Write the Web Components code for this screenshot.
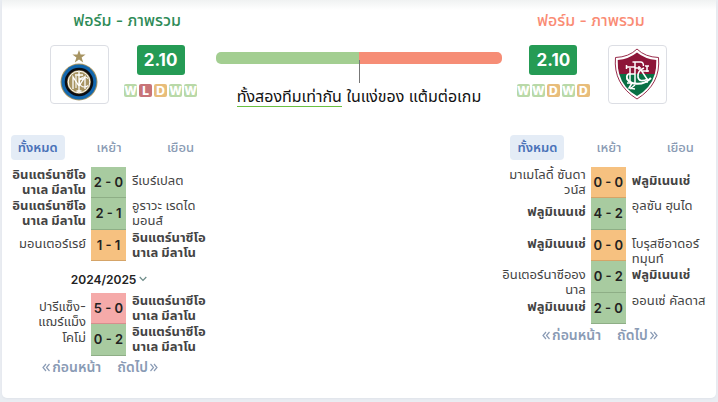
<!DOCTYPE html>
<html lang="th">
<head>
<meta charset="utf-8">
<meta name="viewport" content="width=device-width, initial-scale=1">
<title>ฟอร์ม - ภาพรวม</title>
<style>
  html, body { margin: 0; }
  body { background: #e9edf2; color: #212529; font: 13px/15px "Inter", "Noto Sans Thai", "Noto Sans", sans-serif; }
</style>
</head>
<body>
<form-comparison></form-comparison>

<template id="tpl-comparison">
  <style>
    :host { display: block; box-sizing: border-box; min-height: 100vh; padding: 0 2px 4px; }
    main { box-sizing: border-box; min-height: calc(100vh - 4px); background: linear-gradient(#f0f2f2, #fff 10px); border-radius: 0 0 5px 5px; box-shadow: 0 1px 2px #e0e4ea;
      display: grid; grid-template-columns: 3fr 4fr 3fr; align-items: start; }
  </style>
  <main>
    <team-panel side="home"></team-panel>
    <points-bar><span slot="lead">ทั้งสองทีมเท่ากัน</span> ในแง่ของ แต้มต่อเกม</points-bar>
    <team-panel side="away"></team-panel>
  </main>
</template>

<template id="tpl-bar">
  <style>
    :host { display: block; padding-top: 52px; text-align: center; font-size: 16px; line-height: 19px; }
    .bar { height: 12px; border-radius: 5px; background: linear-gradient(90deg, #a3ce91 50%, #f68d76 50%); position: relative; }
    .bar::after { content: ""; position: absolute; left: 50%; top: 8px; width: 1px; height: 23px; background: #777; }
    p { margin: 23px 0 0; color: #111; white-space: nowrap; }
    ::slotted(span) { display: inline-block; border-bottom: 1px solid #6abf40; }
  </style>
  <div class="bar"></div>
  <p><slot name="lead"></slot><slot></slot></p>
</template>

<template id="tpl-panel">
  <style>
    :host { display: block; }
    h2 { margin: 0; padding: 10px 0 0 36px; font-size: 16px; line-height: 20px; font-weight: 500; text-align: center; color: #2e8b57; }
    .badges { display: flex; justify-content: center; gap: 15px; padding: 15px 0 0 29px; }
    :host([side=away]) h2 { padding: 10px 36px 0 0; color: #fa8b74; }
    :host([side=away]) .badges { flex-direction: row-reverse; gap: 18px; padding: 15px 34px 0 0; }
    .tabs { display: grid; grid-template-columns: repeat(3, 1fr); justify-items: center; padding: 31px 0 7px; }
    .tabs button { width: 54px; height: 25px; border: 0; border-radius: 4px; padding: 0; background: none; font: inherit; font-weight: 500; color: #8a9bb4; }
    .tabs button[aria-selected=true] { background: #e4ecf6; color: #4a72b8; font-weight: 600; }
    .season { display: flex; align-items: center; justify-content: center; gap: 3px; width: 100%; height: 32px; padding: 4px 0 0; border: 0; background: none; font: inherit; font-size: 12px; font-weight: 600; color: #222; }
    nav { display: flex; justify-content: center; gap: 16px; padding: 3px 18px 0 0; font-size: 14px; font-weight: 600; line-height: 16px; }
    nav a { display: flex; align-items: center; gap: 2px; color: #8a9bb5; text-decoration: none; }
  </style>
  <h2>ฟอร์ม - ภาพรวม</h2>
  <div class="badges"><team-crest></team-crest><form-rating></form-rating></div>
  <div class="tabs" role="tablist">
    <button role="tab" aria-selected="true">ทั้งหมด</button><button role="tab" aria-selected="false">เหย้า</button><button role="tab" aria-selected="false">เยือน</button>
  </div>
  <div class="results"></div>
  <nav>
    <a href="#prev"><svg width="8" height="9" fill="none" stroke="currentColor" stroke-width="1.2"><path d="M4 1 1 4.500 4 8M7.500 1l-3 3.500 3 3.500"/></svg>ก่อนหน้า</a>
    <a href="#next">ถัดไป<svg width="8" height="9" fill="none" stroke="currentColor" stroke-width="1.2"><path d="m.5 1 3 3.500-3 3.500M4 1l3 3.500L4 8"/></svg></a>
  </nav>
</template>

<template id="tpl-rating">
  <style>
    :host { display: flex; flex-direction: column; align-items: center; gap: 9px; font-family: Inter, sans-serif; color: #fff; }
    strong { width: 48px; border-radius: 3px; background: #259b55; font-size: 17px; line-height: 30px; font-weight: 700; text-align: center; }
    div { display: flex; gap: 2px; }
    b { width: 13px; height: 13px; border-radius: 2px; font-size: 12px; line-height: 13px; font-weight: 800; text-align: center; display: flex; justify-content: center; }
    .W { background: #b9d9a8; } .L { background: #c87478; } .D { background: #e8bd7b; }
  </style>
  <strong>2.10</strong>
  <div></div>
</template>

<template id="tpl-results">
  <style>
    :host { display: block; }
    table { width: 100%; table-layout: fixed; border-collapse: separate; border-spacing: 0; }
    td { box-sizing: border-box; padding: 0; height: 31px; vertical-align: top; color: #444; }
    tr:nth-child(even) td { height: 32px; }
    td:first-child { width: 89px; text-align: right; }
    td.score { width: 35px; vertical-align: middle; text-align: center; font-family: Inter, sans-serif; font-size: 13px; font-weight: 600; color: #222; border-bottom: 1px solid #8eae86; background: #a8cba0; }
    td.draw { background: #f6c180; border-color: #d5a468; }
    td.loss { background: #f5aaa9; border-color: #d68e8e; }
    .name { height: 31px; padding: 0 0 0 6px; white-space: nowrap; box-sizing: border-box; }
    td:first-child .name { padding: 0 5px 0 0; }
    .name.low, td:first-child .name.low { padding-top: 6px; }
    .own { font-weight: 700; }
  </style>
  <table><tbody></tbody></table>
</template>

<template id="tpl-crest">
  <style>
    :host { display: flex; align-items: center; justify-content: center; box-sizing: border-box; width: 59px; height: 59px; border: 1px solid #dcdee4; border-radius: 4px; background: #fff; }
    svg { display: block; }
  </style>
</template>

<script>
const INTER_CREST = `<svg width="41" height="55" viewBox="0 0 41 55" role="img" aria-label="Inter">
<path d="m20 3 1.600 4.600h5L22.600 10.500l1.600 4.900L20 12.400l-4.200 3 1.600-4.900L13.400 7.600h5z" fill="#a79462"/>
<circle cx="20" cy="35" r="18.500" fill="#a79462"/><circle cx="20" cy="35" r="17.500" fill="#1267ae"/>
<circle cx="20" cy="35" r="14.300" fill="#0c0d12"/><circle cx="20" cy="35" r="11.800" fill="#a79462"/>
<g fill="none" stroke="#fff" stroke-width="1.300"><circle cx="20" cy="35" r="10.800" stroke-width="1"/>
<path d="M14 42V30l6 9 6-9v12M20 25v20M16 28h8M17.500 44h5M20 32h4.500"/>
<path d="M29 31.500a5 5 0 1 0 0 7M17 29v12" stroke-width="1.100"/></g></svg>`;
const FLU_CREST = `<svg width="46" height="53" viewBox="0 0 46 53" role="img" aria-label="Fluminense">
<path d="M23 1Q31 9 44.500 9.500 47 36 23 51-1 36 1.500 9.500 15 9 23 1Z" fill="#fff" stroke="#8d1538" stroke-width=".9"/>
<path d="M23 4.500Q31 11 42.300 12 42.500 20 40.800 26H5.200Q3.500 20 3.700 12 15 11 23 4.500Z" fill="#8d1538"/>
<path d="M5.200 26h35.600Q37 40 23 48 9 40 5.200 26Z" fill="#087044"/>
<g fill="none" stroke="#fff" stroke-width="1.500"><path d="M21 14v22M18.500 14h8q3 0 3 4M21 20h6M25 18v4M16 20v14M13 35h6M12.500 19h8M14 26h7M12.500 17v4"/>
<path d="M31 18h4M33 18v6M28 23h7M21 37l-5 4M18 35l-3 5 6 1M27 22l6 9M31 34h3"/>
<path d="M37 30Q29 38 18 35 10 31 14 26" stroke-width="2"/><path d="M30 20q-7 3-6 9t10 2" stroke-width="1.600"/></g></svg>`;
const INTER = 'อินแตร์นาซีโอ|นาเล มีลาโน', FLU = 'ฟลูมิเนนเช่';
/* Rows: [home, score, away, outcome, home placement, away placement] */
const TEAMS = {
  home: { form: 'WLDWW', crest: INTER_CREST, groups: [
    [[INTER, '2 - 0', 'รีเบร์เปลต', 'win', '', 'low'],
     [INTER, '2 - 1', 'อูราวะ เรดได|มอนส์', 'win', '', ''],
     ['มอนเตอร์เรย์', '1 - 1', INTER, 'draw', 'low', '']],
    [['ปารีแซ็ง-|แฌร์แม็ง', '5 - 0', INTER, 'loss', 'low', ''],
     ['โคโม่', '0 - 2', INTER, 'win', 'low', '']]] },
  away: { form: 'WWDWD', crest: FLU_CREST, groups: [
    [['มาเมโลดี้ ซันดา|วน์ส', '0 - 0', FLU, 'draw', '', 'low'],
     [FLU, '4 - 2', 'อุลซัน ฮุนได', 'win', 'low', ''],
     [FLU, '0 - 0', 'โบรุสซีอาดอร์|ทมุนท์', 'draw', 'low', 'low'],
     ['อินเตอร์นาซีออง|นาล', '0 - 2', FLU, 'win', 'low', 'low'],
     [FLU, '2 - 0', 'ออนเซ่ คัลดาส', 'win', 'low', '']]] }
};
class Base extends HTMLElement {
  mount(id) {
    const root = this.attachShadow({ mode: 'open' });
    root.append(document.getElementById(id).content.cloneNode(true));
    return root;
  }
}
customElements.define('team-crest', class extends Base {
  connectedCallback() { if (!this.shadowRoot) this.mount('tpl-crest').append(document.createRange().createContextualFragment(this.svg || '')); }
});
customElements.define('form-rating', class extends Base {
  connectedCallback() {
    if (this.shadowRoot) return;
    this.mount('tpl-rating').querySelector('div').innerHTML = [...this.form].map(c => `<b class="${c}">${c}</b>`).join('');
  }
});
customElements.define('result-list', class extends Base {
  connectedCallback() {
    if (this.shadowRoot) return;
    const cell = (name, place) => `<td><div class="name ${place} ${name === INTER || name === FLU ? 'own' : ''}">${name.replace('|', '<br>')}</div></td>`;
    this.mount('tpl-results').querySelector('tbody').innerHTML = this.rows.map(([h, s, a, o, hp, ap]) =>
      `<tr>${cell(h, hp)}<td class="score ${o}">${s}</td>${cell(a, ap)}</tr>`).join('');
  }
});
customElements.define('points-bar', class extends Base {
  connectedCallback() { if (!this.shadowRoot) this.mount('tpl-bar'); }
});
customElements.define('team-panel', class extends Base {
  connectedCallback() {
    if (this.shadowRoot) return;
    const team = TEAMS[this.getAttribute('side')];
    const tpl = document.getElementById('tpl-panel').content.cloneNode(true);
    const badges = tpl.querySelector('.badges');
    const crest = document.createElement('team-crest'); crest.svg = team.crest;
    const rating = document.createElement('form-rating'); rating.form = team.form;
    badges.replaceChildren(crest, rating);
    const results = tpl.querySelector('.results');
    team.groups.forEach((rows, i) => {
      if (i) results.insertAdjacentHTML('beforeend', '<button class="season">2024/2025<svg width="8" height="6" fill="none" stroke="#6b8a87" stroke-width="1.2"><path d="m.7 1 3.300 3.500L7.300 1"/></svg></button>');
      const list = document.createElement('result-list'); list.rows = rows; results.append(list);
    });
    this.attachShadow({ mode: 'open' }).append(tpl);
  }
});
customElements.define('form-comparison', class extends Base {
  connectedCallback() { if (!this.shadowRoot) this.mount('tpl-comparison'); }
});
</script>
</body>
</html>
